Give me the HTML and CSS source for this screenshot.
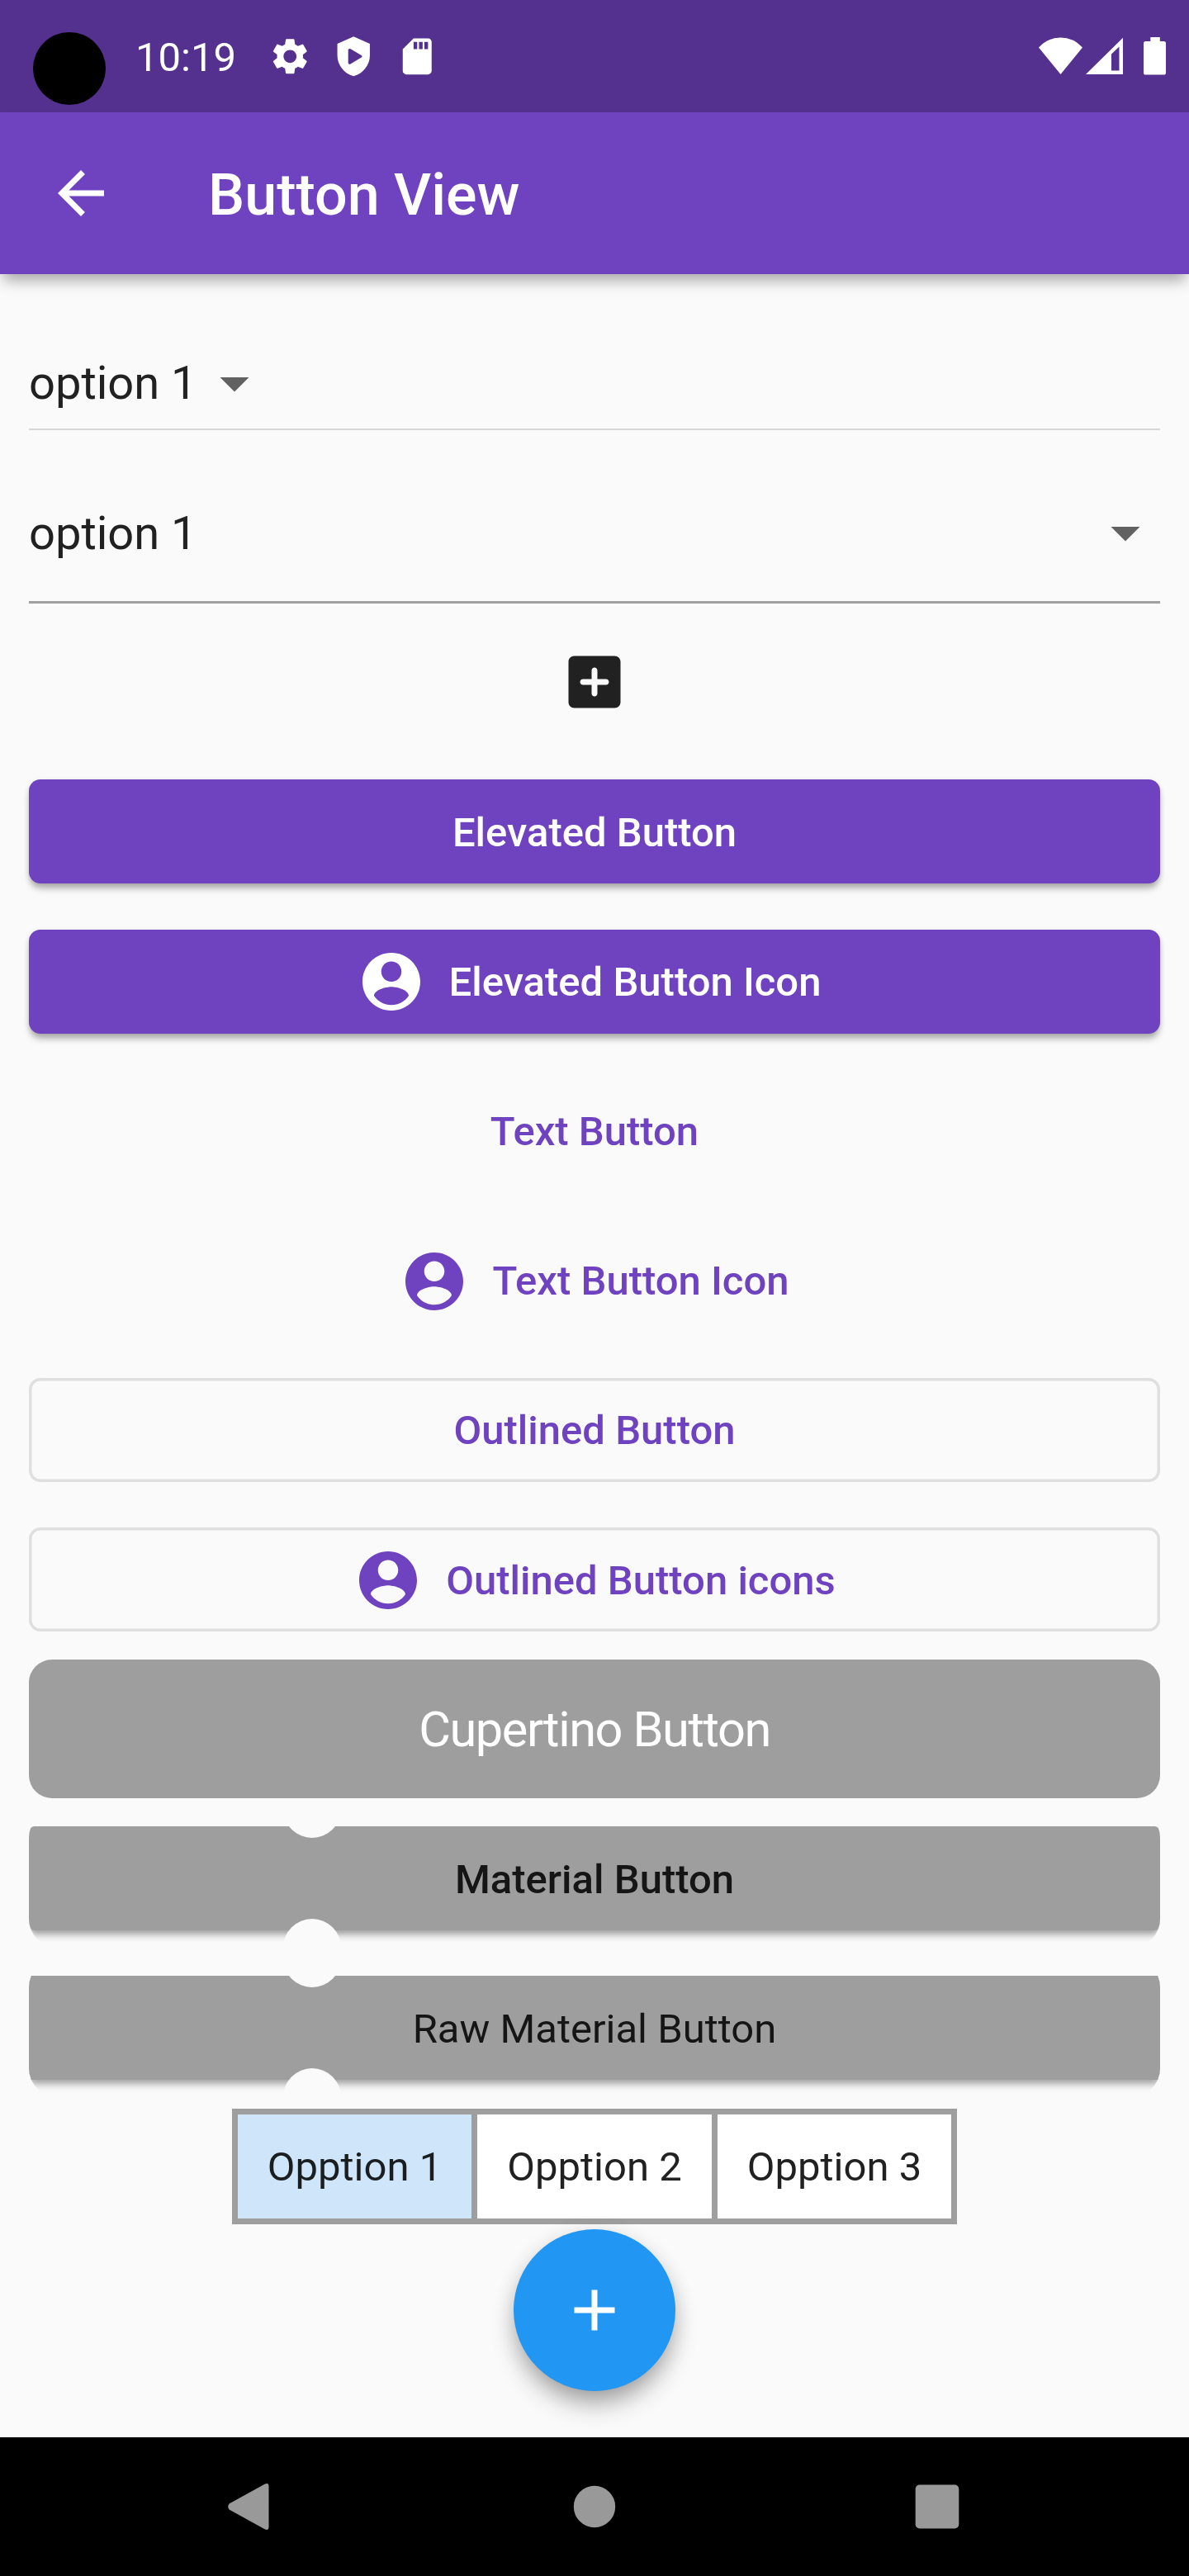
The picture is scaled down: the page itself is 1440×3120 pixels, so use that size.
FILE: index.html
```html
<!DOCTYPE html>
<html lang="en">
<head>
<meta charset="utf-8">
<title>Button View</title>
<link rel="stylesheet" href="styles.css">
</head>
<body>
<svg width="0" height="0" class="defs" aria-hidden="true">
  <symbol id="account" viewBox="0 0 24 24"><path d="M12 2C6.48 2 2 6.48 2 12s4.480 10 10 10 10-4.480 10-10S17.520 2 12 2zm0 3c1.980 0 3.500 1.570 3.500 3.500S13.980 12 12 12 8.500 10.430 8.500 8.500 10.020 5 12 5zm0 15.100c-2.500 0-4.710-1.280-6-3.220.03-1.990 4-3.080 6-3.080s5.970 1.090 6 3.080c-1.290 1.940-3.500 3.220-6 3.220z"/></symbol>
  <symbol id="caret" viewBox="0 0 24 24"><path d="M7 10l5 5 5-5z"/></symbol>
</svg>
<div class="screen">
  <header class="status">
    <span class="camera"></span>
    <span class="clock">10:19</span>
    <div class="notices">
      <svg viewBox="0 0 24 24"><path d="M19.140 12.940c.04-.3.060-.61.060-.94 0-.32-.02-.64-.07-.94l2.030-1.580c.18-.14.23-.41.12-.61l-1.920-3.320c-.12-.22-.37-.29-.59-.22l-2.390.96c-.5-.38-1.030-.7-1.620-.94l-.36-2.540c-.04-.24-.24-.41-.48-.41h-3.840c-.24 0-.43.17-.47.41l-.36 2.540c-.59.24-1.130.57-1.620.94l-2.390-.96c-.22-.08-.47 0-.59.22L2.740 8.870c-.12.21-.08.47.12.61l2.030 1.580c-.05.3-.09.63-.09.94s.02.64.07.94l-2.030 1.580c-.18.14-.23.41-.12.61l1.920 3.320c.12.22.37.29.59.22l2.390-.96c.5.38 1.030.7 1.620.94l.36 2.540c.05.24.24.41.48.41h3.840c.24 0 .44-.17.47-.41l.36-2.540c.59-.24 1.130-.56 1.620-.94l2.390.96c.22.08.47 0 .59-.22l1.920-3.320c.12-.22.07-.47-.12-.61l-2.010-1.580zM12 15.600c-1.980 0-3.600-1.620-3.600-3.600s1.620-3.600 3.600-3.600 3.600 1.620 3.600 3.600-1.620 3.600-3.600 3.600z"/></svg>
      <svg viewBox="0 0 24 24"><path fill-rule="evenodd" d="M12 1L3 5v6.500c0 5.200 3.700 10 9 11.500 5.300-1.500 9-6.300 9-11.500V5zM9 8.600v6.900c0 .7.700 1.100 1.300.7l6-3.600c.5-.3.500-.9 0-1.200l-6-3.500c-.6-.4-1.300 0-1.300.7z"/></svg>
      <svg viewBox="0 0 24 24"><path d="M18 2h-8L4.020 8 4 20c0 1.100.9 2 2 2h12c1.100 0 2-.9 2-2V4c0-1.100-.9-2-2-2zm-6 6h-2V4h2v4zm3 0h-2V4h2v4zm3 0h-2V4h2v4z"/></svg>
    </div>
    <div class="signals">
      <svg width="53" height="46" viewBox="0 0 53 46"><path d="M0 12.500Q11 .5 26.500.5T53 12.500L26.500 45z"/></svg>
      <svg width="45" height="46" viewBox="0 0 45 46"><path fill-rule="evenodd" d="M45 .7V45H0zM31 20.500V40.500h9.500V11.500z"/></svg>
      <svg class="battery" width="27" height="46" viewBox="0 0 27 46"><path d="M8.300 0h11.500v5h4.700Q27 5 27 7.500V43q0 2.600-2.600 2.600H2.600Q0 45.600 0 43V7.500Q0 5 2.500 5h5.800z"/></svg>
    </div>
  </header>
  <div class="appbar">
    <svg class="icon" viewBox="0 0 24 24"><path d="M20 11H7.830l5.590-5.590L12 4l-8 8 8 8 1.410-1.410L7.830 13H20v-2z"/></svg>
    <h1 class="title">Button View</h1>
  </div>
  <main class="body">
    <div class="row select inline"><span>option 1</span><svg class="icon"><use href="#caret"/></svg></div>
    <div class="row select wide"><span>option 1</span><svg class="icon"><use href="#caret"/></svg></div>
    <div class="row"><svg class="icon add" viewBox="0 0 24 24"><path d="M19 3H5c-1.110 0-2 .9-2 2v14c0 1.100.89 2 2 2h14c1.100 0 2-.9 2-2V5c0-1.100-.9-2-2-2zm-3 10h-3v3c0 .55-.45 1-1 1s-1-.45-1-1v-3H8c-.55 0-1-.45-1-1s.45-1 1-1h3V8c0-.55.45-1 1-1s1 .45 1 1v3h3c.55 0 1 .45 1 1s-.45 1-1 1z"/></svg></div>
    <div class="row"><button class="btn elevated">Elevated Button</button></div>
    <div class="row"><button class="btn elevated with-icon"><svg class="icon"><use href="#account"/></svg>Elevated Button Icon</button></div>
    <div class="row"><button class="btn">Text Button</button></div>
    <div class="row"><button class="btn"><svg class="icon"><use href="#account"/></svg>Text Button Icon</button></div>
    <div class="row"><button class="btn outlined">Outlined Button</button></div>
    <div class="row"><button class="btn outlined"><svg class="icon"><use href="#account"/></svg>Outlined Button icons</button></div>
    <div class="row"><button class="btn cupertino">Cupertino Button</button></div>
    <div class="row ticket"><button class="btn material">Material Button</button></div>
    <div class="row ticket"><button class="btn material raw">Raw Material Button</button></div>
    <div class="toggles">
      <span class="toggle selected">Opption 1</span>
      <span class="toggle">Opption 2</span>
      <span class="toggle">Opption 3</span>
    </div>
    <button class="fab"><svg class="icon" viewBox="0 0 24 24"><path d="M19 13h-6v6h-2v-6H5v-2h6V5h2v6h6v2z"/></svg></button>
  </main>
  <nav class="navbar">
    <svg viewBox="0 0 84 84"><path d="M14.500 38.500L57.500 14.800Q62.500 12.500 62.500 17.500V66.500Q62.500 71.500 57.500 69.200L14.500 45.500Q12 42 14.500 38.500z"/></svg>
    <svg viewBox="0 0 84 84"><circle cx="42" cy="42" r="25.200"/></svg>
    <svg viewBox="0 0 84 84"><rect x="15.700" y="15.500" width="52.600" height="53" rx="5"/></svg>
  </nav>
</div>
</body>
</html>
```
FILE: styles.css
```css
* { box-sizing: border-box; }

body {
  margin: 0;
  background: #fafafa;
  font-family: Roboto, sans-serif;
}

.defs { position: absolute; }

.screen {
  display: flex;
  flex-direction: column;
  width: 1440px;
  height: 3120px;
}

svg { display: block; fill: currentColor; }

.icon { width: 84px; height: 84px; flex: none; }

/* Status bar */
.status {
  display: flex;
  align-items: center;
  height: 136px;
  padding: 0 28px 0 40px;
  background: #54318f;
  color: #fff;
}

.camera {
  width: 88px;
  height: 88px;
  margin-top: 30px;
  border-radius: 50%;
  background: #000;
}

.clock {
  width: 197px;
  padding-left: 36px;
  margin-top: 3px;
  font-size: 49px;
}

.notices { display: flex; gap: 24.700px; }
.notices svg { width: 52.500px; height: 52.500px; }

.signals {
  display: flex;
  gap: 4px;
  margin-left: auto;
}

.battery { margin-left: 21px; }

/* App bar */
.appbar {
  display: flex;
  align-items: center;
  gap: 112px;
  height: 196px;
  padding-left: 56px;
  background: #6f42bf;
  color: #fff;
  box-shadow: 0 12px 16px -4px rgba(0, 0, 0, .32);
}

.title {
  margin: 0;
  padding-top: 3px;
  font-size: 70px;
  font-weight: 500;
}

/* Content */
.body {
  display: flex;
  flex-direction: column;
  gap: 13.125px;
  flex: 1;
  padding: 48px 35px 0;
}

.row {
  display: flex;
  align-items: center;
  justify-content: center;
  height: 168px;
  flex: none;
}

.add { color: #212121; }

.select {
  position: relative;
  font-size: 56px;
  color: #212121;
}
.select .icon { color: #616161; }
.select::after {
  content: "";
  position: absolute;
  left: 0;
  right: 0;
}
.inline { justify-content: flex-start; gap: 3px; }
.inline::after { bottom: 27px; height: 2px; background: #d6d6d6; }
.wide { justify-content: space-between; }
.wide span { padding-top: 1px; }
.wide::after { bottom: -2px; height: 3.500px; background: #a0a0a0; }

.btn {
  display: flex;
  align-items: center;
  justify-content: center;
  gap: 28px;
  width: 100%;
  height: 126px;
  padding: 2px 0 0;
  border: 0;
  border-radius: 14px;
  background: none;
  color: #6f42bf;
  font: 500 49px Roboto, sans-serif;
}

.elevated {
  background: #6f42bf;
  color: #fff;
  box-shadow: 0 8px 9px -2px rgba(0, 0, 0, .28), 0 2px 7px rgba(0, 0, 0, .12);
}
.with-icon { padding: 1px 56px 0 42px; }

.outlined { box-shadow: inset 0 0 0 3.500px #dfdfdf; }

.cupertino {
  height: 168px;
  border-radius: 28px;
  background: #9e9e9e;
  color: #fff;
  font-size: 59.500px;
  font-weight: 400;
  letter-spacing: -1.435px;
}

/* Ticket-shaped buttons with round notches in the top and bottom edges */
.ticket {
  position: relative;
  overflow: hidden;
  border-radius: 35px;
}
.ticket::before,
.ticket::after {
  content: "";
  position: absolute;
  left: calc(25% - 35px);
  width: 70px;
  height: 70px;
  border-radius: 50%;
  background: #fafafa;
}
.ticket::before { top: -35px; }
.ticket::after { bottom: -35px; }

.material {
  border-radius: 7px;
  background: #9e9e9e;
  color: #151515;
  box-shadow: 0 8px 9px -2px rgba(0, 0, 0, .28), 0 3px 5px rgba(0, 0, 0, .1);
}
.raw { border-radius: 0; font-weight: 400; }

.toggles {
  display: flex;
  align-self: center;
  gap: 7px;
  height: 140px;
  padding: 7px;
  background: #9e9e9e;
}

.toggle {
  display: flex;
  align-items: center;
  justify-content: center;
  width: 283.500px;
  padding-top: 1px;
  background: #fff;
  color: #212121;
  font-size: 49px;
}
.selected { background: #cfe5f9; color: #1b1e20; }

.fab {
  display: flex;
  align-items: center;
  justify-content: center;
  align-self: center;
  width: 196px;
  height: 196px;
  margin-top: -6.500px;
  border: 0;
  border-radius: 50%;
  background: #2196f3;
  color: #fff;
  box-shadow: 0 20px 32px -6px rgba(0, 0, 0, .32), 0 5px 26px rgba(0, 0, 0, .12);
}

/* System navigation */
.navbar {
  display: grid;
  grid-template-columns: repeat(3, 415.300px);
  justify-content: center;
  place-items: center;
  height: 168px;
  background: #000;
  color: #999;
}
.navbar svg { width: 84px; height: 84px; }
```
